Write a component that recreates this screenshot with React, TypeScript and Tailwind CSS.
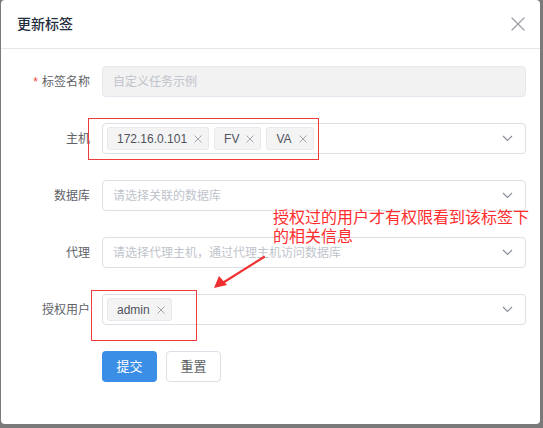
import { X } from 'lucide-react';

const FONT = '"Liberation Sans", "Noto Sans CJK SC", sans-serif';

function Chevron() {
  return (
    <svg width="11" height="7" viewBox="0 0 11 7" className="shrink-0">
      <path d="M1 1 L5.5 5.5 L10 1" fill="none" stroke="#8a8f99" strokeWidth="1.2" />
    </svg>
  );
}

function Tag({ text }: { text: string }) {
  return (
    <span className="flex items-center h-[23px] pl-[9px] pr-[6px] rounded-[3px] bg-[#f4f4f5] border border-[#e9e9eb] text-[12px] text-[#4f535c]">
      {text}
      <svg width="8" height="8" viewBox="0 0 8 8" className="ml-[7px]">
        <path d="M0.5 0.5 L7.5 7.5 M7.5 0.5 L0.5 7.5" stroke="#a3a6ad" strokeWidth="1" />
      </svg>
    </span>
  );
}

interface RowProps {
  label: string;
  required?: boolean;
  children: React.ReactNode;
}

function Row({ label, required, children }: RowProps) {
  return (
    <div className="flex items-center h-[31px] mb-[26px] pr-[14px]">
      <div className="w-[101px] shrink-0 pr-3 text-right text-[12px] text-[#606266]">
        {required && <span className="text-[#f0483e] mr-[4px]">*</span>}
        {label}
      </div>
      {children}
    </div>
  );
}

function SelectBox({ placeholder, tags }: { placeholder?: string; tags?: string[] }) {
  return (
    <div className="flex-1 h-full flex items-center justify-between border border-[#dcdfe6] rounded-[4px] pl-[4px] pr-[12px] bg-white">
      {tags ? (
        <div className="flex items-center gap-[5px]">
          {tags.map((t) => (
            <Tag key={t} text={t} />
          ))}
        </div>
      ) : (
        <span className="pl-[6px] text-[12px] text-[#c0c4cc] whitespace-nowrap">{placeholder}</span>
      )}
      <Chevron />
    </div>
  );
}

export default function App() {
  return (
    <div className="w-[543px] h-[428px] bg-[#7a7a7a] pl-px" style={{ fontFamily: FONT }}>
      <div className="relative w-[539px] h-[424px] bg-white rounded-[4px]">
        {/* Header */}
        <div className="flex items-center justify-between h-[49px] pl-4 pr-[10px] border-b border-[#e6e6e6]">
          <span className="text-[14px] text-[#1f2d3d] font-medium">更新标签</span>
          <X className="w-[24px] h-[24px] text-[#9a9da5]" strokeWidth={1.2} />
        </div>

        {/* Form */}
        <div className="pt-[17px]">
          <Row label="标签名称" required>
            <div className="flex-1 h-full flex items-center border border-[#e4e7ed] rounded-[4px] bg-[#f2f2f2] pl-[10px]">
              <span className="text-[12px] text-[#c0c4cc]">自定义任务示例</span>
            </div>
          </Row>
          <Row label="主机">
            <SelectBox tags={['172.16.0.101', 'FV', 'VA']} />
          </Row>
          <Row label="数据库">
            <SelectBox placeholder="请选择关联的数据库" />
          </Row>
          <Row label="代理">
            <SelectBox placeholder="请选择代理主机，通过代理主机访问数据库" />
          </Row>
          <Row label="授权用户">
            <SelectBox tags={['admin']} />
          </Row>

          <div className="flex gap-[9px] pl-[101px]">
            <button className="w-[55px] h-[31px] rounded-[4px] bg-[#3a8ee6] text-white text-[13px]">提交</button>
            <button className="w-[55px] h-[31px] rounded-[4px] border border-[#dcdfe6] bg-white text-[#606266] text-[13px]">
              重置
            </button>
          </div>
        </div>

        {/* Annotations */}
        <div className="absolute left-[87px] top-[118px] w-[231px] h-[42px] border border-[#ee3b3b]" />
        <div className="absolute left-[90px] top-[290px] w-[106px] h-[51px] border border-[#ee3b3b]" />
        <div
          className="absolute left-[272px] top-[207px] w-[260px] text-[16px] leading-[19px] text-[#ff2d2d]"
          style={{ fontFamily: '"Noto Sans CJK SC", sans-serif' }}
        >
          授权过的用户才有权限看到该标签下的相关信息
        </div>
        <svg className="absolute left-[208px] top-[254px]" width="60" height="38" viewBox="0 0 60 38">
          <path d="M55 3 L12 30" stroke="#f03030" strokeWidth="2.2" strokeLinecap="round" />
          <path d="M5 34 L10 22 L18 31 Z" fill="#f03030" />
        </svg>
      </div>
    </div>
  );
}
